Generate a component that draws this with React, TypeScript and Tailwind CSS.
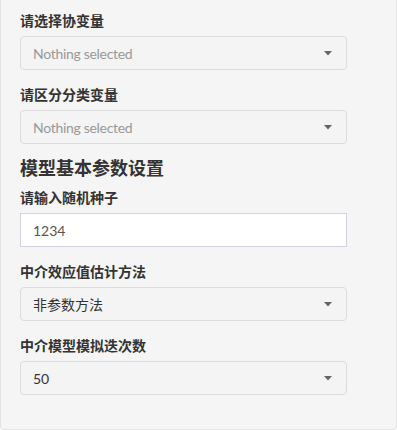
const font = { fontFamily: '"Lato", "Noto Sans CJK SC", sans-serif' };

function Caret() {
    return (
        <svg width="8" height="5" viewBox="0 0 8 5" className="shrink-0">
            <path d="M0 0 L8 0 L4 4.5 Z" fill="#666" />
        </svg>
    );
}

function Picker({ value, placeholder }: { value?: string; placeholder?: string }) {
    return (
        <div className="flex h-[34px] w-[327px] items-center justify-between rounded-[4px] border border-[#dcdcdc] bg-[#f4f4f4] pl-[12px] pr-[14px]">
            <span className={value ? 'text-[14px] text-[#333]' : 'text-[14px] tracking-[-0.3px] text-[#999]'}>{value ?? placeholder}</span>
            <Caret />
        </div>
    );
}

function Label({ children }: { children: string }) {
    return <div className="mb-[5px] text-[14px] font-bold leading-[20px] text-[#333]">{children}</div>;
}

export default function App() {
    return (
        <div className="h-[430px] w-[397px] bg-white" style={font}>
            <div className="rounded-b-[4px] border-x border-b border-[#e3e3e3] bg-[#f5f5f5] pl-[19px] pt-[11px] pb-[19px]">
                <div className="mb-[15px]">
                    <Label>请选择协变量</Label>
                    <Picker placeholder="Nothing selected" />
                </div>
                <div className="mb-[14px]">
                    <Label>请区分分类变量</Label>
                    <Picker placeholder="Nothing selected" />
                </div>
                <h4 className="mb-[10px] text-[18px] font-bold leading-[20px] text-[#333]">模型基本参数设置</h4>
                <div className="mb-[15px]">
                    <Label>请输入随机种子</Label>
                    <div className="flex h-[34px] w-[327px] items-center border border-[#d0d3df] bg-white px-[12px] text-[14px] text-[#555]">
                        1234
                    </div>
                </div>
                <div className="mb-[15px]">
                    <Label>中介效应值估计方法</Label>
                    <Picker value="非参数方法" />
                </div>
                <div className="mb-[15px]">
                    <Label>中介模型模拟迭次数</Label>
                    <Picker value="50" />
                </div>
            </div>
        </div>
    );
}
